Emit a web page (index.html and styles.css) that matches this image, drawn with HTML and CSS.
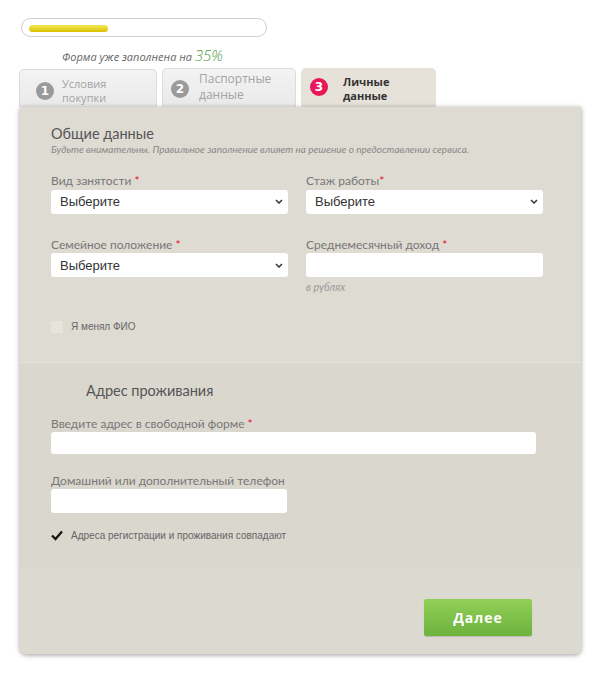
FILE: index.html
```html
<!DOCTYPE html>
<html lang="ru">
<head>
    <meta charset="UTF-8">
    <title>Анкета - Личные данные</title>
    <link rel="stylesheet" href="styles.css">
</head>
<body>
    <div class="wizard">
        <div class="progress">
            <div class="progress-fill"></div>
        </div>
        <p class="progress-caption">Форма уже заполнена на <span class="progress-value">35%</span></p>

        <div class="tabs">
            <div class="tab tab-first">
                <span class="tab-num">1</span>
                <span class="tab-title">Условия<br>покупки</span>
            </div>
            <div class="tab tab-second">
                <span class="tab-num">2</span>
                <span class="tab-title">Паспортные<br>данные</span>
            </div>
            <div class="tab tab-active">
                <span class="tab-num">3</span>
                <span class="tab-title">Личные<br>данные</span>
            </div>
        </div>

        <div class="panel">
            <div class="section section-general">
                <h2 class="section-title">Общие данные</h2>
                <p class="section-note">Будьте внимательны. Правильное заполнение влияет на решение о предоставлении сервиса.</p>

                <div class="form-grid">
                    <div class="field">
                        <label class="field-label">Вид занятости <span class="req">*</span></label>
                        <div class="select-wrap">
                            <select class="field-select"><option>Выберите</option></select>
                            <svg class="select-arrow" width="8" height="5" viewBox="0 0 8 5"><path d="M1 1 L4 4 L7 1" fill="none" stroke="#333" stroke-width="1.5"/></svg>
                        </div>
                    </div>
                    <div class="field">
                        <label class="field-label">Стаж работы<span class="req">*</span></label>
                        <div class="select-wrap">
                            <select class="field-select"><option>Выберите</option></select>
                            <svg class="select-arrow" width="8" height="5" viewBox="0 0 8 5"><path d="M1 1 L4 4 L7 1" fill="none" stroke="#333" stroke-width="1.5"/></svg>
                        </div>
                    </div>
                    <div class="field">
                        <label class="field-label">Семейное положение <span class="req">*</span></label>
                        <div class="select-wrap">
                            <select class="field-select"><option>Выберите</option></select>
                            <svg class="select-arrow" width="8" height="5" viewBox="0 0 8 5"><path d="M1 1 L4 4 L7 1" fill="none" stroke="#333" stroke-width="1.5"/></svg>
                        </div>
                    </div>
                    <div class="field">
                        <label class="field-label">Среднемесячный доход <span class="req">*</span></label>
                        <input class="field-input" type="text">
                        <span class="field-hint">в рублях</span>
                    </div>
                </div>

                <label class="check check-name">
                    <span class="check-box"></span>
                    Я менял ФИО
                </label>
            </div>

            <div class="section section-address">
                <h2 class="section-title address-title">Адрес проживания</h2>

                <div class="field field-wide">
                    <label class="field-label">Введите адрес в свободной форме <span class="req">*</span></label>
                    <input class="field-input" type="text">
                </div>

                <div class="field field-phone">
                    <label class="field-label">Домашний или дополнительный телефон</label>
                    <input class="field-input" type="text">
                </div>

                <label class="check check-same">
                    <svg class="check-mark" width="12" height="11" viewBox="0 0 12 11">
                        <path d="M1 5.5 L4.5 9 L11 1.5" fill="none" stroke="#1a1a1a" stroke-width="2.4"/>
                    </svg>
                    Адреса регистрации и проживания совпадают
                </label>
            </div>

            <div class="section section-actions">
                <button class="btn-next">Далее</button>
            </div>
        </div>
    </div>
</body>
</html>
```

FILE: styles.css
```css
body {
    margin: 0;
    background: #fff;
    font-family: 'Open Sans', sans-serif;
    color: #555;
}

.wizard {
    width: 561px;
    padding: 18px 0 20px 20px;
}

/* progress */
.progress {
    width: 246px;
    height: 19px;
    margin-left: 1px;
    padding: 6px 7px;
    box-sizing: border-box;
    border: 1px solid #cfcfcf;
    border-radius: 10px;
}

.progress-fill {
    width: 79px;
    height: 7px;
    border-radius: 4px;
    background: linear-gradient(#f5e65a, #d8c300);
}

.progress-caption {
    margin: 9px 0 0 42px;
    font-size: 11px;
    font-style: italic;
    color: #666;
    line-height: 18px;
}

.progress-value {
    font-size: 15px;
    color: #4e9a3e;
    font-weight: 300;
}

/* tabs */
.tabs {
    display: flex;
    align-items: flex-end;
    gap: 5px;
    margin-top: 2px;
    margin-left: -1px;
    height: 39px;
}

.tab {
    display: flex;
    align-items: flex-start;
    height: 39px;
    width: 138px;
    box-sizing: border-box;
    background: linear-gradient(#f3f3f3, #e9e9e9);
    border: 1px solid #dcdcdc;
    border-bottom: none;
    border-radius: 5px 5px 0 0;
}

.tab-first {
    height: 38px;
    padding: 7px 0 0 16px;
}

.tab-second {
    width: 134px;
    padding: 2px 0 0 8px;
}

.tab-active {
    width: 135px;
    background: #e6e2da;
    border-color: #e6e2da;
    padding: 6px 0 0 8px;
}

.tab-num {
    flex: none;
    width: 18px;
    height: 18px;
    border-radius: 50%;
    background: #9a9a9a;
    color: #fff;
    font-family: 'DejaVu Sans', sans-serif;
    font-weight: bold;
    font-size: 12px;
    line-height: 18px;
    text-align: center;
    margin: 5px 8px 0 0;
}

.tab-second .tab-num {
    margin: 9px 10px 0 0;
}

.tab-active .tab-num {
    background: #e8175a;
    margin: 3px 15px 0 0;
}

.tab-title {
    font-size: 11px;
    line-height: 14px;
    color: #a3a3a3;
}

.tab-second .tab-title {
    font-size: 12px;
    line-height: 16px;
}

.tab-active .tab-title {
    color: #333;
    font-weight: bold;
}

/* panel */
.panel {
    position: relative;
    background: #dedbd3;
    border-radius: 0 0 6px 6px;
    box-shadow: 0 1px 5px rgba(0, 0, 0, 0.4);
}

.section {
    padding: 18px 30px 0 31px;
}

.section-general {
    height: 255px;
    box-sizing: border-box;
}

.section-address {
    height: 206px;
    box-sizing: border-box;
    padding-top: 19px;
    background: #dad7cf;
    border-top: 1px solid #e6e3dc;
}

.section-actions {
    display: flex;
    justify-content: flex-end;
    height: 86px;
    box-sizing: border-box;
    padding: 31px 49px 0 0;
    background: #dcd9d1;
    border-radius: 0 0 6px 6px;
}

.section-title {
    margin: 0;
    font-family: 'Lato', sans-serif;
    font-size: 14.5px;
    font-weight: normal;
    line-height: 18px;
    color: #555;
}

.address-title {
    margin-left: 35px;
}

.section-note {
    margin: 0;
    font-family: 'Lato', sans-serif;
    font-size: 10px;
    line-height: 12px;
    font-style: italic;
    color: #888;
}

.form-grid {
    display: grid;
    grid-template-columns: 237px 237px;
    column-gap: 18px;
    row-gap: 23px;
    margin-top: 18px;
}

.field {
    display: flex;
    flex-direction: column;
}

.field-label {
    font-family: 'Lato', sans-serif;
    font-size: 12px;
    line-height: 16px;
    color: #777;
}

.req {
    color: #e0102a;
}

.select-wrap {
    position: relative;
}

.select-arrow {
    position: absolute;
    right: 5px;
    top: 10px;
    pointer-events: none;
}

.field-select,
.field-input {
    width: 100%;
    height: 24px;
    box-sizing: border-box;
    border: none;
    border-radius: 3px;
    background: #fff;
    font-family: 'Liberation Sans', Arial, sans-serif;
    font-size: 13px;
    color: #333;
}

.field-select {
    appearance: none;
    padding-left: 9px;
}

.field-hint {
    margin-top: 4px;
    font-family: 'Lato', sans-serif;
    font-size: 10.5px;
    font-style: italic;
    color: #999;
}

.field-wide {
    width: 485px;
    margin-top: 16px;
}

.field-wide .field-input {
    height: 22px;
}

.field-phone {
    width: 236px;
    margin-top: 19px;
}

.check {
    display: flex;
    align-items: center;
    gap: 8px;
    font-family: 'Liberation Sans', Arial, sans-serif;
    font-size: 10px;
    color: #666;
}

.check-name {
    margin-top: 28px;
}

.check-box {
    width: 12px;
    height: 12px;
    border-radius: 2px;
    background: #e7e4de;
}

.check-same {
    margin-top: 17px;
}

.btn-next {
    width: 108px;
    height: 37px;
    border: none;
    border-radius: 2px;
    background: linear-gradient(#92cf58, #6cb23c);
    color: #fff;
    font-family: 'Open Sans', sans-serif;
    font-weight: bold;
    font-size: 14px;
    letter-spacing: 1px;
    box-shadow: 0 1px 1px rgba(0, 0, 0, 0.15);
}
```
